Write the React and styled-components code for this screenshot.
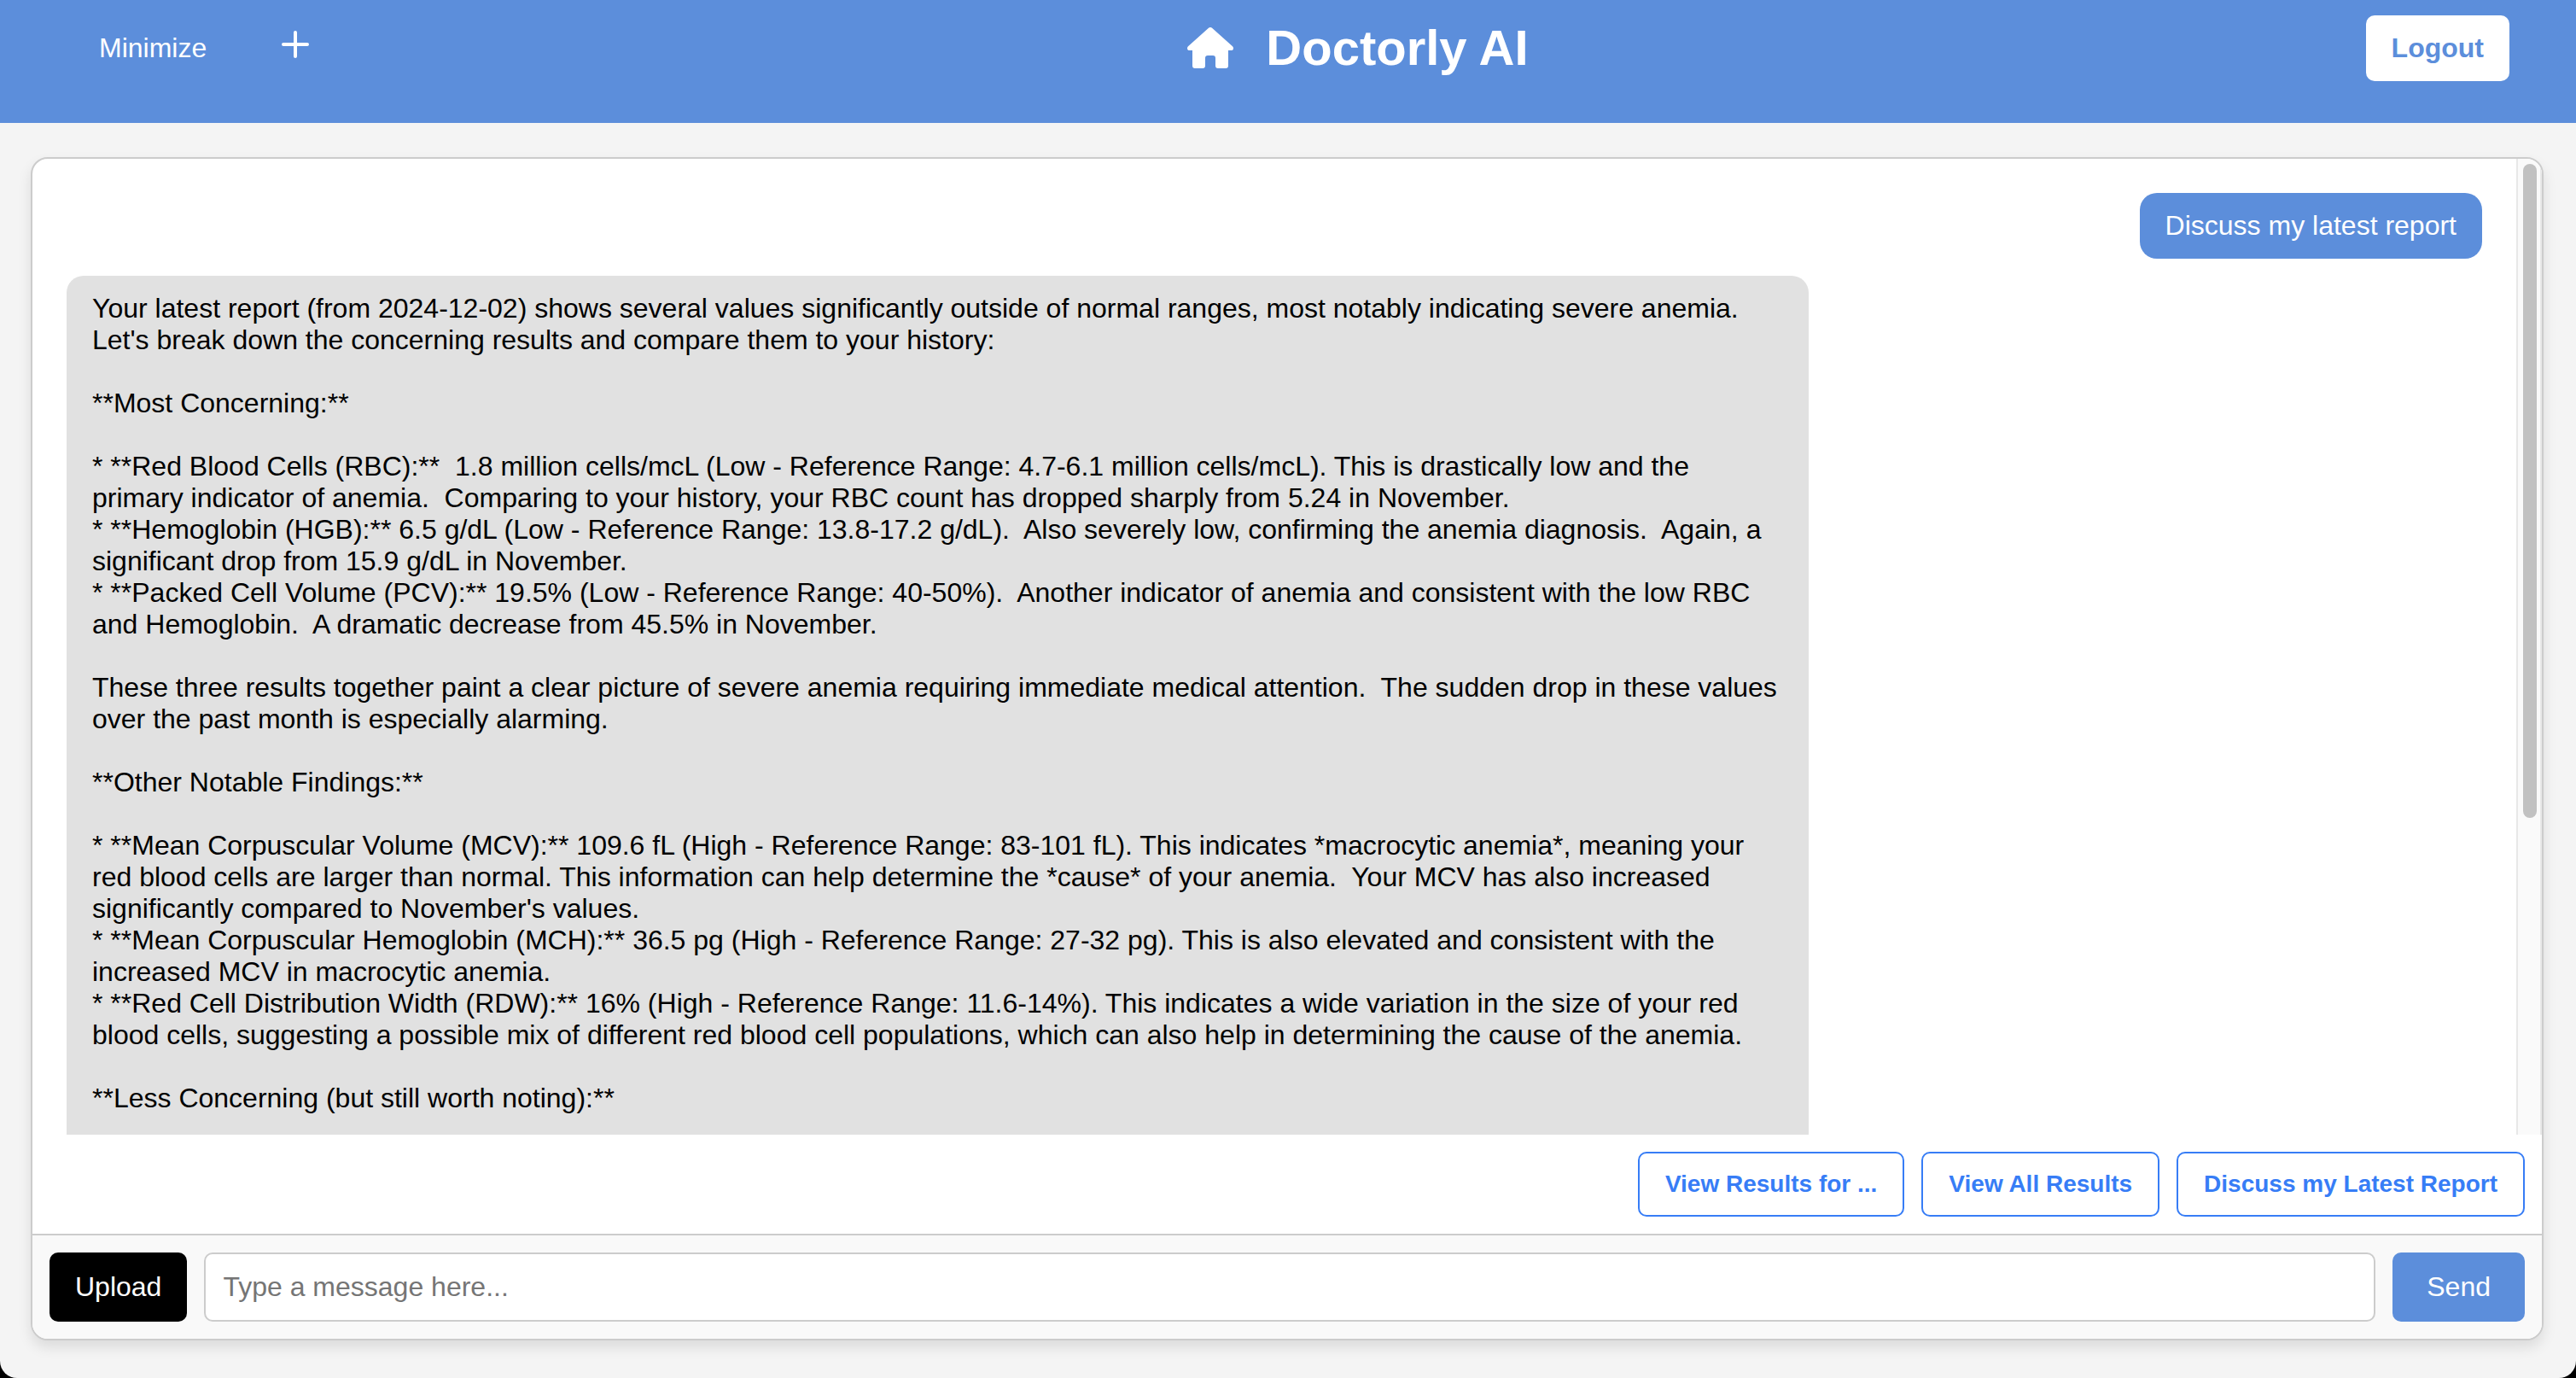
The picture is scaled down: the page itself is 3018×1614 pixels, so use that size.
import React from "react";
import styled, { createGlobalStyle } from "styled-components";

const blue = "#5c8edb";

const GlobalStyle = createGlobalStyle`
  *, *::before, *::after { box-sizing: border-box; }
  body {
    margin: 0;
    background: #000;
    font-family: "Liberation Sans", Arial, Helvetica, sans-serif;
    font-size: 32px;
    line-height: 37px;
    color: #000;
  }
  button, input { font: inherit; margin: 0; }
  button { cursor: pointer; }
`;

const Page = styled.div`
  display: flex;
  flex-direction: column;
  height: 100vh;
  overflow: hidden;
  background: #f4f4f4;
  border-radius: 0 0 20px 20px;
`;

const Header = styled.header`
  display: flex;
  justify-content: space-between;
  align-items: flex-start;
  height: 144px;
  flex: none;
  padding: 18px 78px 0 116px;
  background: ${blue};
  color: #fff;
`;

const HeaderLeft = styled.div`
  display: flex;
  align-items: center;
  gap: 40px;
  height: 77px;
`;

const PlainButton = styled.button`
  display: flex;
  padding: 0;
  border: 0;
  background: none;
  color: inherit;
`;

const IconButton = styled(PlainButton)`
  padding: 0 48px 9px;
`;

const Brand = styled.div`
  display: flex;
  align-items: center;
  gap: 38px;
  height: 76px;
`;

const HomeLink = styled.a`
  display: flex;
  color: inherit;
`;

const Title = styled.h1`
  margin: 0;
  font-size: 58px;
  line-height: 66px;
  font-weight: 700;
`;

const LogoutButton = styled.button`
  padding: 20px 30px;
  border: 0;
  border-radius: 10px;
  background: #fff;
  color: ${blue};
  font-weight: 700;
`;

const Main = styled.main`
  flex: 1;
  min-height: 0;
  display: flex;
  padding: 40px 38px 44px 36px;
`;

const Card = styled.section`
  flex: 1;
  min-width: 0;
  display: flex;
  flex-direction: column;
  overflow: hidden;
  border: 2px solid #ccc;
  border-radius: 20px;
  background: #fff;
  box-shadow: 0 8px 16px rgba(0, 0, 0, 0.1);
`;

const Conversation = styled.div`
  flex: 1;
  min-height: 0;
  display: flex;
`;

const Messages = styled.div`
  flex: 1;
  min-width: 0;
  display: flex;
  flex-direction: column;
  gap: 20px;
  padding: 40px;
  overflow-y: auto;
  scrollbar-width: none;
`;

const Bubble = styled.p`
  flex: none;
  box-sizing: content-box;
  max-width: 70%;
  margin: 0;
  padding: 20px 30px;
  border-radius: 20px;
  white-space: pre-wrap;
  align-self: ${(p) => (p.$own ? "flex-end" : "flex-start")};
  background: ${(p) => (p.$own ? blue : "#e1e1e1")};
  color: ${(p) => (p.$own ? "#fff" : "#000")};
`;

const ScrollTrack = styled.div`
  flex: none;
  width: 30px;
  padding: 0 4px 0 6px;
  border: 0 solid #e8e8e8;
  border-width: 0 2px;
  background: #fafafa;
`;

const ScrollThumb = styled.div`
  width: 16px;
  height: 67%;
  border-radius: 8px;
  background: #c1c1c1;
`;

const ThumbInset = styled.div`
  height: 6px;
`;

const Suggestions = styled.div`
  display: flex;
  justify-content: flex-end;
  gap: 20px;
  padding: 20px;
`;

const SuggestionButton = styled.button`
  padding: 20px 30px;
  border: 2px solid #377df6;
  border-radius: 10px;
  background: #fff;
  color: #377df6;
  font-size: 28px;
  line-height: 32px;
  font-weight: 700;
`;

const Composer = styled.form`
  display: flex;
  gap: 20px;
  padding: 20px;
  border-top: 2px solid #ccc;
  background: #f9f9f9;
`;

const ActionButton = styled.button`
  padding: 0 ${(p) => (p.$primary ? 40 : 30)}px;
  border: 0;
  border-radius: 10px;
  background: ${(p) => (p.$primary ? blue : "#000")};
  color: #fff;
`;

const MessageInput = styled.input`
  flex: 1;
  min-width: 0;
  height: 81px;
  padding: 20px;
  border: 2px solid #ccc;
  border-radius: 10px;
  background: #fff;
  &::placeholder { color: #757575; opacity: 1; }
`;

function PlusIcon() {
  return (
    <svg width="32" height="32" viewBox="0 0 32 32" aria-hidden="true">
      <path d="M16 2V30M2 16H30" stroke="currentColor" strokeWidth="4" strokeLinecap="round" />
    </svg>
  );
}

function HomeIcon() {
  return (
    <svg width="54" height="48" viewBox="0 0 54 48" aria-hidden="true">
      <path
        fill="currentColor"
        d="M27 0Q28.200 0 29 .7L53 22.300Q54 23.200 54 24.400Q54 27 51 27H48V45Q48 48 45 48H36Q33 48 33 45V36Q33 33 30 33H24Q21 33 21 36V45Q21 48 18 48H9Q6 48 6 45V27H3Q0 27 0 24.400Q0 23.200 1 22.300L25 .7Q25.800 0 27 0Z"
      />
    </svg>
  );
}

const report = `Your latest report (from 2024-12-02) shows several values significantly outside of normal ranges, most notably indicating severe anemia.  Let's break down the concerning results and compare them to your history:

**Most Concerning:**

* **Red Blood Cells (RBC):**  1.8 million cells/mcL (Low - Reference Range: 4.7-6.1 million cells/mcL). This is drastically low and the primary indicator of anemia.  Comparing to your history, your RBC count has dropped sharply from 5.24 in November.
* **Hemoglobin (HGB):** 6.5 g/dL (Low - Reference Range: 13.8-17.2 g/dL).  Also severely low, confirming the anemia diagnosis.  Again, a significant drop from 15.9 g/dL in November.
* **Packed Cell Volume (PCV):** 19.5% (Low - Reference Range: 40-50%).  Another indicator of anemia and consistent with the low RBC and Hemoglobin.  A dramatic decrease from 45.5% in November.

These three results together paint a clear picture of severe anemia requiring immediate medical attention.  The sudden drop in these values over the past month is especially alarming.

**Other Notable Findings:**

* **Mean Corpuscular Volume (MCV):** 109.6 fL (High - Reference Range: 83-101 fL). This indicates *macrocytic anemia*, meaning your red blood cells are larger than normal. This information can help determine the *cause* of your anemia.  Your MCV has also increased significantly compared to November's values.
* **Mean Corpuscular Hemoglobin (MCH):** 36.5 pg (High - Reference Range: 27-32 pg). This is also elevated and consistent with the increased MCV in macrocytic anemia.
* **Red Cell Distribution Width (RDW):** 16% (High - Reference Range: 11.6-14%). This indicates a wide variation in the size of your red blood cells, suggesting a possible mix of different red blood cell populations, which can also help in determining the cause of the anemia.

**Less Concerning (but still worth noting):**


`;

const messages = [
  { id: 1, own: true, text: "Discuss my latest report" },
  { id: 2, own: false, text: report },
];

const suggestions = ["View Results for ...", "View All Results", "Discuss my Latest Report"];

export default function App() {
  return (
    <>
      <GlobalStyle />
      <Page>
        <Header>
          <HeaderLeft>
            <PlainButton type="button">Minimize</PlainButton>
            <IconButton type="button" aria-label="New chat">
              <PlusIcon />
            </IconButton>
          </HeaderLeft>
          <Brand>
            <HomeLink href="#" aria-label="Home">
              <HomeIcon />
            </HomeLink>
            <Title>Doctorly AI</Title>
          </Brand>
          <LogoutButton type="button">Logout</LogoutButton>
        </Header>
        <Main>
          <Card>
            <Conversation>
              <Messages>
                {messages.map((m) => (
                  <Bubble key={m.id} $own={m.own}>{m.text}</Bubble>
                ))}
              </Messages>
              <ScrollTrack aria-hidden="true">
                <ThumbInset />
                <ScrollThumb />
              </ScrollTrack>
            </Conversation>
            <Suggestions>
              {suggestions.map((s) => (
                <SuggestionButton type="button" key={s}>{s}</SuggestionButton>
              ))}
            </Suggestions>
            <Composer onSubmit={(e) => e.preventDefault()}>
              <ActionButton type="button">Upload</ActionButton>
              <MessageInput type="text" aria-label="Message" placeholder="Type a message here..." />
              <ActionButton type="submit" $primary>Send</ActionButton>
            </Composer>
          </Card>
        </Main>
      </Page>
    </>
  );
}
